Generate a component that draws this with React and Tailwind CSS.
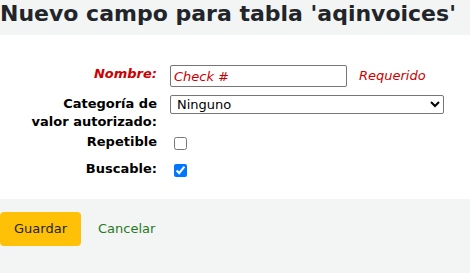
import { useState } from "react";

function Row({ label, className = "", labelClass = "", children }) {
  return (
    <div className={`flex items-start gap-[13px] ${className}`}>
      <label className={`w-[157px] shrink-0 text-right font-bold leading-[18px] ${labelClass}`}>
        {label}
      </label>
      <div className="flex-1">{children}</div>
    </div>
  );
}

export default function App() {
  const [repeatable, setRepeatable] = useState(false);
  const [searchable, setSearchable] = useState(true);

  return (
    <div className="min-h-[273px] bg-[#f3f4f4] font-['DejaVu_Sans',sans-serif] text-[#000]">
      <h1 className="h-[35px] pt-[1px] text-[22px] font-bold leading-[26px] text-[#212529]">
        Nuevo campo para tabla 'aqinvoices'
      </h1>

      <div className="bg-white pt-[30px] pb-[21px] text-[13px]">
        <Row label="Nombre:" labelClass="italic text-[#cc0000]">
          <div className="flex items-center gap-[12px]">
            <input
              type="text"
              defaultValue="Check #"
              className="h-[22px] w-[177px] rounded-[2px] border border-[#767676] px-[3px] text-[13px] italic text-[#cc0000] outline-none"
            />
            <span className="italic text-[#cc0000]">Requerido</span>
          </div>
        </Row>

        <Row
          className="mt-[8px]"
          label={
            <>
              Categoría de
              <br />
              valor autorizado:
            </>
          }
        >
          <select className="h-[19px] w-[274px] rounded-[2px] border border-[#767676] bg-white px-[2px] text-[13px] leading-[17px]">
            <option>Ninguno</option>
          </select>
        </Row>

        <Row className="mt-[2px]" label="Repetible">
          <div className="flex h-[18px] items-center pl-[4px] pt-[3px]">
            <input
              type="checkbox"
              checked={repeatable}
              onChange={(e) => setRepeatable(e.target.checked)}
              className="m-0 h-[13px] w-[13px]"
            />
          </div>
        </Row>

        <Row className="mt-[9px]" label="Buscable:">
          <div className="flex h-[18px] items-center pl-[4px] pt-[3px]">
            <input
              type="checkbox"
              checked={searchable}
              onChange={(e) => setSearchable(e.target.checked)}
              className="m-0 h-[13px] w-[13px]"
            />
          </div>
        </Row>
      </div>

      <div className="flex items-center gap-[17px] pt-[13px] text-[13px]">
        <button className="h-[34px] w-[81px] rounded-[4px] bg-[#ffc107] text-[#212529]">
          Guardar
        </button>
        <a href="#" className="text-[#1f7a1f]">
          Cancelar
        </a>
      </div>
    </div>
  );
}
